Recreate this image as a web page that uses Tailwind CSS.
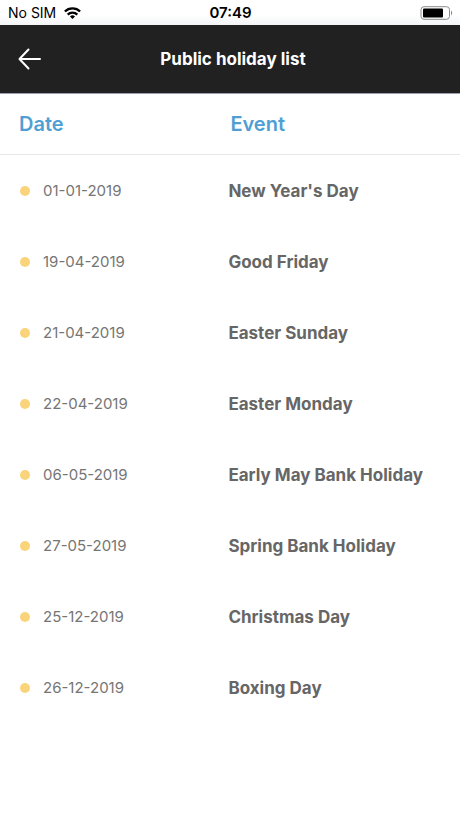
<!DOCTYPE html>
<html lang="en">
<head>
  <meta charset="utf-8">
  <meta name="viewport" content="width=device-width, initial-scale=1.0">
  <title>Public holiday list</title>
  <script src="https://cdn.jsdelivr.net/npm/@tailwindcss/browser@4"></script>
</head>
<body class="bg-white font-['Inter','Liberation_Sans',sans-serif]">

  <!-- Status bar -->
  <div class="grid grid-cols-3 items-center h-[25px] pl-2 pr-[7px] bg-linear-to-b from-white from-60% to-gray-100 text-black text-sm">
    <div class="flex items-center gap-2">
      <span>No SIM</span>
      <svg class="w-[17px] h-3" viewBox="0 0 17 12" fill="none" stroke="#000" stroke-width="2.4">
        <path d="M.9 4.5a10.9 10.9 0 0 1 15.2 0"/>
        <path d="M3.7 7.6a6.9 6.9 0 0 1 9.6 0"/>
        <path d="M8.5 12L6 9.5a3.6 3.6 0 0 1 5 0z" fill="#000" stroke="none"/>
      </svg>
    </div>
    <div class="text-center font-semibold text-[15px]">07:49</div>
    <svg class="justify-self-end w-[33px] h-[14px]" viewBox="0 0 33 14" fill="none">
      <rect x="1" y=".7" width="28.5" height="12.6" rx="3" stroke="#8a8a8a"/>
      <rect x="3" y="2.5" width="20" height="9" rx="1" fill="#000"/>
      <path d="M31 4.6c1.6.8 1.6 4 0 4.8z" fill="#8a8a8a"/>
    </svg>
  </div>

  <!-- Header -->
  <header class="grid grid-cols-[48px_1fr_48px] items-center h-[69px] px-[10px] bg-[#212121] border-b border-gray-400 text-white">
    <button type="button" aria-label="Back" class="flex items-center h-10 pl-2">
      <svg class="w-6 h-6" viewBox="0 0 24 24" fill="none" stroke="#fff" stroke-width="2" stroke-linecap="round" stroke-linejoin="round">
        <path d="M22 12H1.5M10.5 2.5L1.5 12l9 9.5"/>
      </svg>
    </button>
    <h1 class="pt-[2px] pl-[6px] text-center text-[17px] font-bold">Public holiday list</h1>
  </header>

  <!-- Holidays -->
  <table class="w-full table-fixed border-separate border-spacing-0 text-left">
    <thead class="text-xl text-[#509fd3]">
      <tr class="h-[61px]">
        <th class="w-[49%] pl-[19px] border-b border-gray-200 font-semibold">Date</th>
        <th class="pl-[5px] border-b border-gray-200 font-semibold">Event</th>
      </tr>
    </thead>
    <tbody id="holidays" class="text-[#666666]"></tbody>
  </table>

  <script>
    const holidays = [
      ["01-01-2019", "New Year's Day"],
      ["19-04-2019", "Good Friday"],
      ["21-04-2019", "Easter Sunday"],
      ["22-04-2019", "Easter Monday"],
      ["06-05-2019", "Early May Bank Holiday"],
      ["27-05-2019", "Spring Bank Holiday"],
      ["25-12-2019", "Christmas Day"],
      ["26-12-2019", "Boxing Day"],
    ];

    document.getElementById("holidays").innerHTML = holidays.map(([date, event]) => `
      <tr class="h-[71px]">
        <td class="pl-5">
          <div class="flex items-center gap-[13px] text-[15px] text-[#757575]">
            <span class="size-[10px] rounded-full bg-[#fad47b]"></span>
            <span class="pt-[2px]">${date}</span>
          </div>
        </td>
        <td class="pt-[2px] pl-[3px] text-[17px] font-bold">${event}</td>
      </tr>
    `).join("");
  </script>
</body>
</html>
